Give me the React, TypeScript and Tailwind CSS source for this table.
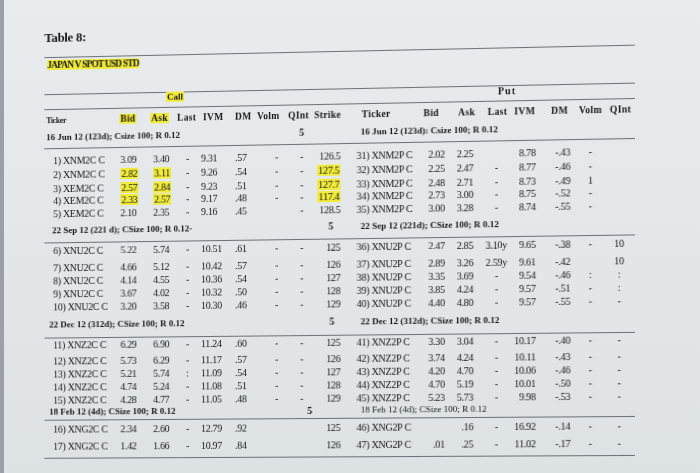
const GRID =
  "grid grid-cols-[71px_30px_28px_24px_32px_23px_35px_22px_43px_65px_32px_28px_31px_35px_28px_26px_30px] items-center"

// where the values sit inside each column
const COLS = [
  "pl-[7px]",
  "pl-[4px]",
  "pl-[7px]",
  "pl-[12px]",
  "pl-[3px]",
  "pl-[5px]",
  "pl-[22px]",
  "pl-[12px]",
  "text-right pr-[13px]",
  "pl-[3px]",
  "text-right pr-[7px]",
  "text-right pr-[7px]",
  "text-center",
  "text-right pr-[12px]",
  "pl-[7px]",
  "text-center",
  "text-center",
]

const HEAD = ["Ticker", "*Bid", "*Ask", "Last", "IVM", "DM", "Volm", "QInt", "Strike", "Ticker", "Bid", "Ask", "Last", "IVM", "DM", "Volm", "QInt"]
const HEAD_COLS = [
  "pl-0 text-[8px] tracking-[-0.4px]",
  "pl-[3px]",
  "pl-[4px]",
  "pl-[3px]",
  "pl-[5px]",
  "pl-[5px]",
  "pl-[4px]",
  "pl-0",
  "pl-[4px]",
  "pl-[8px]",
  "pl-[4px]",
  "pl-[6px]",
  "pl-[7px]",
  "pl-[2px]",
  "pl-[3px]",
  "pl-[2px]",
  "pl-[6px]",
]

const S1 = [
  ["1) XNM2C C", "3.09", "3.40", "-", "9.31", ".57", "-", "-", "126.5", "31) XNM2P C", "2.02", "2.25", "", "8.78", "-.43", "-", ""],
  ["2) XNM2C C", "*2.82", "*3.11", "-", "9.26", ".54", "-", "-", "*127.5", "32) XNM2P C", "2.25", "2.47", "-", "8.77", "-.46", "-", ""],
  ["3) XEM2C C", "*2.57", "*2.84", "-", "9.23", ".51", "-", "-", "*127.7", "33) XNM2P C", "2.48", "2.71", "-", "8.73", "-.49", "1", ""],
  ["4) XEM2C C", "*2.33", "*2.57", "-", "9.17", ".48", "-", "-", "*117.4", "34) XNM2P C", "2.73", "3.00", "-", "8.75", "-.52", "-", ""],
  ["5) XEM2C C", "2.10", "2.35", "-", "9.16", ".45", "", "-", "128.5", "35) XNM2P C", "3.00", "3.28", "-", "8.74", "-.55", "-", ""],
]
const S1_H = ["mt-[5px] h-[14px]", "h-[14px]", "h-[13px]", "h-[12px]", "h-[14px]"]

const S2 = [
  ["6) XNU2C C", "5.22", "5.74", "-", "10.51", ".61", "-", "-", "125", "36) XNU2P C", "2.47", "2.85", "3.10y", "9.65", "-.38", "-", "10"],
  ["7) XNU2C C", "4.66", "5.12", "-", "10.42", ".57", "-", "-", "126", "37) XNU2P C", "2.89", "3.26", "2.59y", "9.61", "-.42", "", "10"],
  ["8) XNU2C C", "4.14", "4.55", "-", "10.36", ".54", "-", "-", "127", "38) XNU2P C", "3.35", "3.69", "-", "9.54", "-.46", ":", ":"],
  ["9) XNU2C C", "3.67", "4.02", "-", "10.32", ".50", "-", "-", "128", "39) XNU2P C", "3.85", "4.24", "-", "9.57", "-.51", "-", ":"],
  ["10) XNU2C C", "3.20", "3.58", "-", "10.30", ".46", "-", "-", "129", "40) XNU2P C", "4.40", "4.80", "-", "9.57", "-.55", "-", "-"],
]
const S2_H = ["h-[15px]", "mt-[3px] h-[13px]", "h-[13px]", "h-[13px]", "h-[13px]"]

const S3 = [
  ["11) XNZ2C C", "6.29", "6.90", "-", "11.24", ".60", "-", "-", "125", "41) XNZ2P C", "3.30", "3.04", "-", "10.17", "-.40", "-", "-"],
  ["12) XNZ2C C", "5.73", "6.29", "-", "11.17", ".57", "-", "-", "126", "42) XNZ2P C", "3.74", "4.24", "-", "10.11", "-.43", "-", "-"],
  ["13) XNZ2C C", "5.21", "5.74", ":", "11.09", ".54", "-", "-", "127", "43) XNZ2P C", "4.20", "4.70", "-", "10.06", "-.46", "-", "-"],
  ["14) XNZ2C C", "4.74", "5.24", "-", "11.08", ".51", "-", "-", "128", "44) XNZ2P C", "4.70", "5.19", "-", "10.01", "-.50", "-", "-"],
  ["15) XNZ2C C", "4.28", "4.77", "-", "11.05", ".48", "-", "-", "129", "45) XNZ2P C", "5.23", "5.73", "-", "9.98", "-.53", "-", "-"],
]
const S3_H = ["h-[13px]", "mt-[3px] h-[13px]", "h-[13px]", "h-[13px]", "h-[13px]"]

const S4 = [
  ["16) XNG2C C", "2.34", "2.60", "-", "12.79", ".92", "", "", "125", "46) XNG2P C", "", ".16", "-", "16.92", "-.14", "-", "-"],
  ["17) XNG2C C", "1.42", "1.66", "-", "10.97", ".84", "", "", "126", "47) XNG2P C", ".01", ".25", "-", "11.02", "-.17", "-", "-"],
]
const S4_H = ["mt-[2px] h-[14px]", "mt-[3px] h-[14px]"]

function Val({ v }: { v: string }) {
  if (v.startsWith("*")) return <span className="bg-[#f1eb3a] px-[1px]">{v.slice(1)}</span>
  return <>{v}</>
}

function Rule({ className = "" }: { className?: string }) {
  return <div className={`h-px w-[585px] bg-[#6c7277] ${className}`} />
}

function DataRow({ cells, className }: { cells: string[]; className: string }) {
  return (
    <div className={`${GRID} ml-[2px] text-[10px] leading-none tracking-[-0.3px] ${className}`}>
      {cells.map((c, i) => (
        <div key={i} className={`whitespace-nowrap ${COLS[i]}`}>
          <Val v={c} />
        </div>
      ))}
    </div>
  )
}

interface DateRowProps {
  left: string
  leftPad: string
  right: string
  five: 8 | 9
  fivePad: string
  rightBold?: boolean
  className: string
}

function DateRow({ left, leftPad, right, five, fivePad, rightBold = true, className }: DateRowProps) {
  return (
    <div className={`${GRID} ml-[2px] text-[9px] leading-none ${className}`}>
      <div className={`col-span-7 whitespace-nowrap font-bold ${leftPad}`}>{left}</div>
      <div className={`text-[10px] font-bold ${five === 8 ? fivePad : ""}`}>{five === 8 ? "5" : ""}</div>
      <div className={`text-[10px] font-bold ${five === 9 ? fivePad : ""}`}>{five === 9 ? "5" : ""}</div>
      <div className={`col-span-8 whitespace-nowrap pl-[7px] ${rightBold ? "font-bold" : ""}`}>{right}</div>
    </div>
  )
}

export default function App() {
  return (
    <div className="flex h-[473px] w-[700px] overflow-hidden bg-linear-to-b from-[#e9ecee] to-[#dde2e5] font-['Liberation_Serif',serif] text-[#171717]">
      <div className="w-[4px] shrink-0 bg-[#9aa0a5]" />
      {/* the page was photographed at an angle: keystone it the same way */}
      <div className="origin-top-left pl-[41px] pt-[31px] [transform:matrix3d(0.982,-0.0231,0,-0.00004,0,1,0,0,0,0,1,0,0,0,0,1)]">
        <div className="text-[13px] font-bold leading-[16px] tracking-[-0.3px]">Table 8:</div>
        <Rule className="mt-[11px]" />
        <div className="ml-[3px] mt-[2px] h-[10px] text-[9.5px] font-bold leading-[10px] tracking-[-0.8px]">
          <span className="bg-[#f1eb3a]">JAPAN V SPOT USD STD</span>
        </div>

        <Rule className="mt-[24px]" />
        <div className={`${GRID} ml-[2px] h-[14px] items-start font-bold leading-none`}>
          <div className="col-span-9 pl-[121px] text-[9px] leading-[9px]">
            <span className="bg-[#f1eb3a] px-[1px]">Call</span>
          </div>
          <div className="col-span-8 pl-[142px] text-[10px] leading-[10px] tracking-[1px]">Put</div>
        </div>
        <Rule />

        {/* column heads */}
        <div className={`${GRID} ml-[2px] mt-[3px] h-[16px] text-[9.5px] font-bold leading-none tracking-[0.3px]`}>
          {HEAD.map((h, i) => (
            <div key={i} className={`whitespace-nowrap ${HEAD_COLS[i]}`}>
              <Val v={h} />
            </div>
          ))}
        </div>

        <DateRow
          left="16 Jun 12 (123d); Csize 100; R 0.12"
          leftPad=""
          right="16 Jun 12 (123d): Csize 100; R 0.12"
          five={8}
          fivePad="pl-[11px]"
          className="mt-[1px] h-[14px]"
        />
        <Rule className="mt-[4px]" />
        {S1.map((r, i) => (
          <DataRow key={i} cells={r} className={S1_H[i]} />
        ))}

        <DateRow
          left="22 Sep 12 (221 d); CSize 100; R 0.12-"
          leftPad="pl-[6px]"
          right="22 Sep 12 (221d); CSize 100; R 0.12"
          five={9}
          fivePad="pl-[18px]"
          className="mt-[2px] h-[14px]"
        />
        <Rule className="mt-[5px]" />
        {S2.map((r, i) => (
          <DataRow key={i} cells={r} className={S2_H[i]} />
        ))}

        <DateRow
          left="22 Dec 12 (312d); CSize 100; R 0.12"
          leftPad="pl-[3px]"
          right="22 Dec 12 (312d); CSize 100; R 0.12"
          five={9}
          fivePad="pl-[19px]"
          className="mt-[4px] h-[14px]"
        />
        <Rule className="mt-[6px]" />
        {S3.map((r, i) => (
          <DataRow key={i} cells={r} className={S3_H[i]} />
        ))}

        <DateRow
          left="18 Feb 12 (4d); CSize 100; R 0.12"
          leftPad="pl-[3px]"
          right="18 Feb 12 (4d); CSize 100; R 0.12"
          five={8}
          fivePad="pl-[19px]"
          rightBold={false}
          className="h-[11px]"
        />
        <Rule className="mt-[2px]" />
        {S4.map((r, i) => (
          <DataRow key={i} cells={r} className={S4_H[i]} />
        ))}
        <Rule className="mt-[4px]" />
      </div>
    </div>
  )
}
